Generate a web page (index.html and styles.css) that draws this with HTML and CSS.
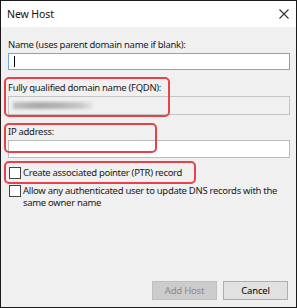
FILE: index.html
```html
<!DOCTYPE html>
<html>
<head>
<meta charset="utf-8">
<link rel="stylesheet" href="styles.css">
</head>
<body>
<div class="dlg">
  <div class="titlebar">
    <span class="title">New Host</span>
    <svg class="close" width="10" height="10" viewBox="0 0 10 10"><path d="M0.5 0.5L9.5 9.5M9.5 0.5L0.5 9.5" stroke="#333" stroke-width="1.1" fill="none"/></svg>
  </div>
  <div class="body">
    <div class="label l1">Name (uses parent domain name if blank):</div>
    <div class="input focus"><span class="caret"></span></div>
    <div class="label l2">Fully qualified domain name (FQDN):</div>
    <div class="input disabled"><span class="blur"></span></div>
    <div class="label l3">IP address:</div>
    <div class="input"></div>
    <div class="check c1"><span class="box"></span><span class="ctext">Create associated pointer (PTR) record</span></div>
    <div class="check c2"><span class="box"></span><span class="ctext">Allow any authenticated user to update DNS records with the same owner name</span></div>
    <div class="buttons">
      <button class="btn disabled-btn" disabled>Add Host</button>
      <button class="btn">Cancel</button>
    </div>
  </div>
  <div class="hl h1"></div>
  <div class="hl h2"></div>
  <div class="hl h3"></div>
</div>
</body>
</html>
```
FILE: styles.css
```css
html, body { margin: 0; padding: 0; }
body { font-family: "Noto Sans", "Open Sans", sans-serif; font-size: 9.5px; letter-spacing: -0.3px; color: #1a1a1a; }
.dlg {
  position: relative;
  width: 297px; height: 308px;
  box-sizing: border-box;
  border: 1px solid #1a1a1a;
  display: flex; flex-direction: column;
  background: #f0f0f0;
}
.titlebar {
  height: 26px; background: #fff;
  display: flex; align-items: center; justify-content: space-between;
  padding: 0 4px 0 6px;
}
.title { font-size: 10.5px; letter-spacing: -0.1px; color: #111; }
.close { margin-right: 3px; }
.body {
  flex: 1; display: flex; flex-direction: column;
  padding: 0 6px 7px 7px;
}
.label { line-height: 13px; }
.l1 { margin-top: 11px; }
.l2 { margin-top: 11px; }
.l3 { margin-top: 10px; }
.input {
  box-sizing: border-box; height: 18px; margin-top: 2px;
  border: 1px solid #bcbcbc; background: #fff; position: relative;
}
.input.focus { border-color: #6aaae6; height: 17px; }
.input.disabled { background: #f0f0f0; height: 19px; border-color: #c4c4c4; }
.caret { position: absolute; left: 5px; top: 2px; width: 1px; height: 11px; background: #000; }
.blur {
  position: absolute; left: 4px; top: 5px; width: 80px; height: 7px;
  background: linear-gradient(90deg, #c2c2c2 0, #a9a9a9 30%, #b4b4b4 60%, #c8c8c8 85%, #e8e8e8 100%);
  filter: blur(1.4px);
}
.check { display: flex; align-items: flex-start; margin-left: 1px; }
.c1 { margin-top: 9px; }
.c2 { margin-top: 6px; }
.box {
  flex: none; box-sizing: border-box; width: 12px; height: 12px;
  border: 1px solid #444; background: #fff; margin-right: 2px;
}
.ctext { line-height: 12px; }
.buttons { margin-top: auto; display: flex; justify-content: flex-end; gap: 6px; padding-right: 2px; }
.btn {
  box-sizing: border-box; height: 19px; width: 65px;
  font-family: inherit; font-size: 9.5px; letter-spacing: -0.2px; padding: 0;
  border: 1px solid #adadad; background: #e1e1e1; color: #000;
}
.btn.disabled-btn { background: #cccccc; border-color: #bfbfbf; color: #8a8a8a; }
.hl {
  position: absolute; box-sizing: border-box;
  border: 2px solid #e5424a; border-radius: 5px;
}
.h1 { left: 3px; top: 76px; width: 166px; height: 40px; }
.h2 { left: 3px; top: 122px; width: 153px; height: 30px; }
.h3 { left: 3px; top: 160px; width: 192px; height: 23px; }
```
